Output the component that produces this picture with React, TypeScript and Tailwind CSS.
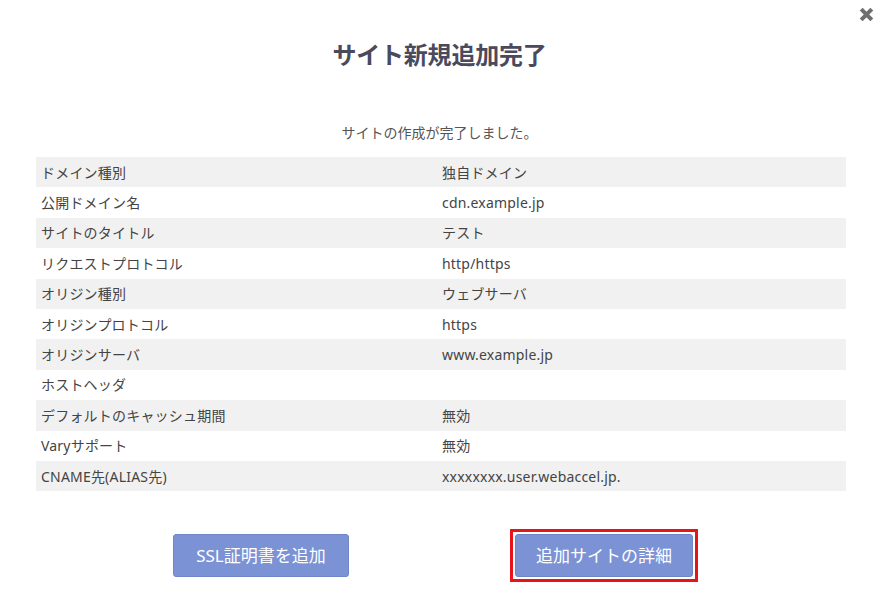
import React from 'react';

const rows: [string, string][] = [
  ['ドメイン種別', '独自ドメイン'],
  ['公開ドメイン名', 'cdn.example.jp'],
  ['サイトのタイトル', 'テスト'],
  ['リクエストプロトコル', 'http/https'],
  ['オリジン種別', 'ウェブサーバ'],
  ['オリジンプロトコル', 'https'],
  ['オリジンサーバ', 'www.example.jp'],
  ['ホストヘッダ', ''],
  ['デフォルトのキャッシュ期間', '無効'],
  ['Varyサポート', '無効'],
  ['CNAME先(ALIAS先)', 'xxxxxxxx.user.webaccel.jp.'],
];

export default function App() {
  return (
    <div
      className="relative w-[879px] h-[598px] bg-white text-[#444] overflow-hidden"
      style={{ fontFamily: '"Noto Sans", "Noto Sans CJK JP", sans-serif' }}
    >
      {/* Close */}
      <button className="absolute right-[4px] top-[6px] w-[17px] h-[17px] text-[#6f6f6f]">
        <svg viewBox="0 0 16 16" className="w-full h-full">
          <path d="M3 3 L13 13 M13 3 L3 13" stroke="currentColor" strokeWidth="3.8" strokeLinecap="butt" />
        </svg>
      </button>

      {/* Header */}
      <h2 className="pt-[38px] text-center text-[24px] leading-[34px] font-bold text-[#4a4a5c] tracking-[-0.2px]">
        サイト新規追加完了
      </h2>

      <p className="mt-[51px] text-center text-[14px] leading-[20px] text-[#555]">
        サイトの作成が完了しました。
      </p>

      {/* Summary table */}
      <div className="mt-[14px] ml-[36px] w-[810px] text-[14px] tracking-[0.2px]">
        {rows.map(([label, value], i) => (
          <div
            key={label}
            className={`flex items-center h-[30.4px] ${i % 2 === 0 ? 'bg-[#f1f1f1]' : 'bg-white'}`}
          >
            <div className="w-[401px] pl-[5px] text-[#444]">{label}</div>
            <div className="flex-1 pl-[5px] text-[#444]">{value}</div>
          </div>
        ))}
      </div>

      {/* Footer buttons */}
      <div className="mt-[38px] flex justify-center items-center gap-[161px] pr-[8px]">
        <button className="w-[176px] h-[43px] rounded-[3px] bg-[#7b92d4] border border-[#6f86c9] text-white text-[17px]">
          SSL証明書を追加
        </button>
        <div className="border-[3px] border-[#e8141c] p-[2px]">
          <button className="w-[178px] h-[43px] rounded-[3px] bg-[#7b92d4] border border-[#6f86c9] text-white text-[17px]">
            追加サイトの詳細
          </button>
        </div>
      </div>
    </div>
  );
}
